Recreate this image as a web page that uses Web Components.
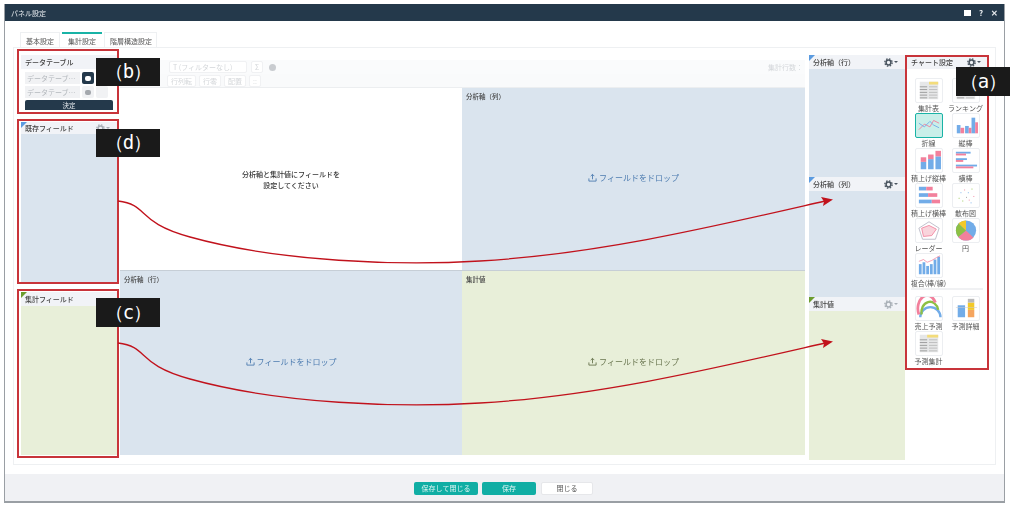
<!DOCTYPE html>
<html lang="ja">
<head>
<meta charset="utf-8">
<title>パネル設定</title>
<style>
  html, body { margin: 0; padding: 0; background: #fff; }
  body { font-family: "Noto Sans CJK JP", "Noto Sans", sans-serif; width: 1024px; height: 507px; overflow: hidden; }
</style>
</head>
<body>
<settings-page></settings-page>

<script>
const GEAR = `<svg width="9" height="9" viewBox="0 0 12 12"><circle cx="6" cy="6" r="3.2" fill="none" stroke="currentColor" stroke-width="2"/><circle cx="6" cy="6" r="4.9" fill="none" stroke="currentColor" stroke-width="1.8" stroke-dasharray="2 1.85"/></svg>`;
const UPLOAD = `<svg width="9" height="9" viewBox="0 0 10 10" fill="none" stroke="currentColor" stroke-width="1"><path d="M1 6v3h8V6M5 7V1.5M3 3.5l2-2 2 2"/></svg>`;

class GearMenu extends HTMLElement {
  constructor() {
    super();
    this.attachShadow({ mode: 'open' });
    this.shadowRoot.innerHTML = `
      <style>
        :host { display: inline-flex; align-items: center; gap: 1px; color: #4a5560; }
        :host([muted]) { color: #a9b0b7; }
        i { width: 0; height: 0; border: 2px solid transparent; border-top-color: currentColor; border-bottom: 0; }
        svg { display: block; }
      </style>${GEAR}<i></i>`;
  }
}
customElements.define('gear-menu', GearMenu);

// パネル（見出し + 本体）
class FieldPanel extends HTMLElement {
  constructor() {
    super();
    this.attachShadow({ mode: 'open' });
    this.shadowRoot.innerHTML = `
      <style>
        :host { display: flex; flex-direction: column; min-height: 0; position: relative; background: #f1f3f7; --zone: #dae4ee; }
        :host([tone="green"]) { --zone: #e8efd9; }
        .head { flex: none; height: var(--head, 14px); display: flex; align-items: center; justify-content: space-between;
                padding: 0 7px 0 4px; font-size: 7px; font-weight: 500; color: #444; white-space: nowrap; }
        .body { flex: 1; min-height: 0; background: var(--zone); }
        .mark { position: absolute; left: 0; top: 0; width: 0; height: 0; border-top: 6px solid #5b9be0; border-right: 6px solid transparent; }
        :host([tone="green"]) .mark { border-top-color: #6b9c2e; }
        :host([plain]) .mark { display: none; }
        :host([plain]) .body { background: #fff; }
      </style>
      <div class="mark"></div>
      <div class="head"><span></span><slot name="tool"></slot></div>
      <div class="body"><slot></slot></div>`;
  }
  connectedCallback() {
    this.shadowRoot.querySelector('.head span').textContent = this.getAttribute('label') || '';
  }
}
customElements.define('field-panel', FieldPanel);

class DropZone extends HTMLElement {
  constructor() {
    super();
    this.attachShadow({ mode: 'open' });
    this.shadowRoot.innerHTML = `
      <style>
        :host { display: flex; flex-direction: column; min-height: 0; background: #dae4ee; color: #4d7cb0; }
        :host([tone="green"]) { background: #e8efd9; color: #69754f; }
        .head { flex: none; height: 15px; padding: 0 4px; display: flex; align-items: center; font-size: 6.5px; font-weight: 500; color: #444; }
        .msg { flex: 1; display: flex; align-items: center; justify-content: center; gap: 2px; font-size: 8px; padding-bottom: 18px; }
        svg { display: block; }
      </style>
      <div class="head"></div>
      <div class="msg">${UPLOAD}<span>フィールドをドロップ</span></div>`;
  }
  connectedCallback() {
    this.shadowRoot.querySelector('.head').textContent = this.getAttribute('label') || '';
  }
}
customElements.define('drop-zone', DropZone);

class DataTablePanel extends HTMLElement {
  constructor() {
    super();
    this.attachShadow({ mode: 'open' });
    this.shadowRoot.innerHTML = `
      <style>
        :host { display: flex; flex-direction: column; background: #fff; }
        .head { height: 14px; flex: none; background: #f1f3f7; display: flex; align-items: center; padding: 0 4px; font-size: 7px; font-weight: 500; color: #444; }
        .rows { display: grid; grid-template-columns: 55px 12px 12px; gap: 2px 2px; padding: 3px 4px 0 4px; }
        .inp { height: 12px; background: #f1f2f4; color: #b4b8bd; font-size: 7px; line-height: 12px; padding-left: 2px; white-space: nowrap; overflow: hidden; }
        .btn { height: 12px; background: #f1f2f4; border-radius: 2px; display: flex; align-items: center; justify-content: center; }
        .btn.on { background: #24394b; }
        .btn b { width: 6px; height: 5px; border-radius: 2px; background: #a4a8ad; }
        .btn.on b { background: #fff; }
        .ok { margin: 2px 4px 0 4px; height: 10px; background: #24394b; border-radius: 2px 2px 0 0; color: #e4e8ec; font-size: 6.5px; line-height: 10px; text-align: center; }
      </style>
      <div class="head">データテーブル</div>
      <div class="rows">
        <div class="inp">データテーブ…</div><div class="btn on"><b></b></div><div></div>
        <div class="inp">データテーブ…</div><div class="btn"><b></b></div><div class="btn"></div>
      </div>
      <div class="ok">決定</div>`;
  }
}
customElements.define('data-table-panel', DataTablePanel);

const BLUE = '#72ace8', PINK = '#f2809c', YEL = '#f3c928', GRN = '#8dc044';
const bars = (list) => list.map(([x, y, w, h, c]) => `<rect x="${x}" y="${y}" width="${w}" height="${h}" fill="${c}"/>`).join('');
const table = (hd) => {
  let s = `<rect x="4" y="3" width="20" height="19" fill="#e6e7e8"/><rect x="${hd}" y="3" width="${24 - hd}" height="3" fill="#f3dc7a"/>`;
  for (let y = 8; y < 22; y += 3) s += `<rect x="4" y="${y}" width="8" height="1" fill="#999"/><rect x="14" y="${y}" width="9" height="1" fill="#bbb"/>`;
  return s;
};
const CHART_ICONS = {
  table: table(14),
  rank: table(4),
  line: `<polyline points="3,17 9,11 15,14 19,7 25,10" fill="none" stroke="${PINK}" stroke-width="1"/><polyline points="3,10 9,14 15,8 19,12 25,15" fill="none" stroke="${BLUE}" stroke-width="1"/>`,
  column: bars([[4,12,4,9,BLUE],[8,15,4,6,PINK],[13,13,4,8,BLUE],[17,15,3,6,PINK],[20,4,4,17,BLUE],[24,9,3,12,PINK]]),
  stackcol: bars([[5,14,6,8,BLUE],[5,9,6,5,PINK],[13,11,6,11,BLUE],[13,6,6,5,PINK],[21,8,6,14,BLUE],[21,2,6,6,PINK]]),
  bar: bars([[3,3,16,2,BLUE],[3,5,11,2,PINK],[3,10,12,2,BLUE],[3,12,8,2,PINK],[3,17,23,2,BLUE],[3,19,19,2,PINK]]),
  stackbar: bars([[3,3,8,4,BLUE],[11,3,7,4,PINK],[3,10,10,4,BLUE],[13,10,10,4,PINK],[3,17,14,4,BLUE],[17,17,9,4,PINK]]),
  scatter: bars([[6,15,1,1,GRN],[10,18,1,1,GRN],[12,6,1,1,PINK],[16,9,1,1,BLUE],[20,5,1,1,GRN],[22,13,1,1,PINK],[17,17,1,1,PINK],[8,9,1,1,BLUE],[19,20,1,1,BLUE],[14,14,1,1,'#999']]),
  radar: `<polygon points="14,3 25,10 21,22 7,22 3,10" fill="none" stroke="#aab" stroke-width=".8"/><polygon points="14,7 22,11 17,18 8,19 6,10" fill="#f9d4dc" stroke="${PINK}" stroke-width=".9"/>`,
  pie: `<circle cx="14" cy="12.5" r="11" fill="${BLUE}"/><path d="M14 12.5L22 20A11 11 0 0 1 5.5 19.5Z" fill="${PINK}"/><path d="M14 12.5L5.500 19.500A11 11 0 0 1 6 5Z" fill="${GRN}"/><path d="M14 12.5L6 5A11 11 0 0 1 14 1.500Z" fill="${YEL}"/>`,
  combo: bars([[3,11,3,11,BLUE],[7,9,3,13,BLUE],[11,13,3,9,BLUE],[15,11,3,11,BLUE],[19,6,3,16,BLUE],[23,3,3,19,BLUE]]) + `<polyline points="3,8 8,6 12,9 17,7 22,4 26,2" fill="none" stroke="${PINK}" stroke-width=".8"/>`,
  forecast: `<path d="M3 22A11 11 0 0 1 25 22" fill="none" stroke="${BLUE}" stroke-width="2.600" transform="translate(1.500 0)"/><path d="M5 22A9 11 0 0 1 23 17" fill="none" stroke="${GRN}" stroke-width="2.600" transform="translate(1 -3)"/><path d="M3 22A10 14 0 0 1 21 9" fill="none" stroke="${PINK}" stroke-width="3" transform="translate(0 -3)"/>`,
  detail: bars([[5,9,8,13,BLUE],[16,14,7,8,'#f5a55f'],[16,6,7,8,YEL],[16,2,7,4,'#b9b9b9']]) + `<rect x="3" y="11" width="23" height=".6" fill="#ccc"/>`,
  sumfc: table(12)
};

class ChartItem extends HTMLElement {
  constructor() {
    super();
    this.attachShadow({ mode: 'open' });
  }
  connectedCallback() {
    const kind = this.getAttribute('kind');
    this.shadowRoot.innerHTML = `
      <style>
        :host { display: flex; flex-direction: column; align-items: center; font-size: 7px; color: #555; white-space: nowrap; line-height: 9px; }
        .ic { width: 28px; height: 25px; box-sizing: border-box; background: #fff; border: 1px solid #eceef1; border-radius: 2px; flex: none; }
        :host([selected]) .ic { background: #c9efe9; border: 1px solid #19b3a6; }
        svg { display: block; width: 100%; height: 100%; }
        .t { margin-top: 1px; }
      </style>
      <div class="ic"><svg viewBox="0 0 28 25">${CHART_ICONS[kind] || ''}</svg></div>
      <div class="t"><slot></slot></div>`;
  }
}
customElements.define('chart-item', ChartItem);

class ChartPanel extends HTMLElement {
  constructor() {
    super();
    this.attachShadow({ mode: 'open' });
    this.shadowRoot.innerHTML = `
      <style>
        :host { display: flex; flex-direction: column; background: #fff; }
        .head { height: 14px; flex: none; background: #f1f3f7; display: flex; align-items: center; justify-content: space-between;
                padding: 0 6px 0 4px; font-size: 7px; font-weight: 500; color: #444; }
        .grid { display: grid; grid-template-columns: 37px 37px; grid-auto-rows: 35px; justify-content: center; padding-top: 9px; }
        .sep { height: 2px; background: #f0f1f3; margin: 0 4px; }
        .grid.b { padding-top: 6px; }
      </style>
      <div class="head">チャート設定<gear-menu></gear-menu></div>
      <div class="grid">
        <chart-item kind="table">集計表</chart-item><chart-item kind="rank">ランキング</chart-item>
        <chart-item kind="line" selected>折線</chart-item><chart-item kind="column">縦棒</chart-item>
        <chart-item kind="stackcol">積上げ縦棒</chart-item><chart-item kind="bar">横棒</chart-item>
        <chart-item kind="stackbar">積上げ横棒</chart-item><chart-item kind="scatter">散布図</chart-item>
        <chart-item kind="radar">レーダー</chart-item><chart-item kind="pie">円</chart-item>
        <chart-item kind="combo">複合(棒/線)</chart-item>
      </div>
      <div class="sep"></div>
      <div class="grid b">
        <chart-item kind="forecast">売上予測</chart-item><chart-item kind="detail">予測詳細</chart-item>
        <chart-item kind="sumfc">予測集計</chart-item>
      </div>`;
  }
}
customElements.define('chart-panel', ChartPanel);

class GridToolbar extends HTMLElement {
  constructor() {
    super();
    this.attachShadow({ mode: 'open' });
    this.shadowRoot.innerHTML = `
      <style>
        :host { display: flex; flex-direction: column; height: 30px; padding-top: 2px; box-sizing: border-box; color: #d4d7da; font-size: 7px; border-bottom: 1px solid #eceef0; }
        .r1 { height: 14px; flex: none; display: flex; align-items: center; gap: 4px; padding-left: 49px; background: #fafbfc; }
        .r2 { flex: 1; display: flex; align-items: center; gap: 3px; padding-left: 47px; background: #f9fafb; }
        .chip { border: 1px solid #f0f1f3; background: #fff; border-radius: 2px; padding: 0 3px; line-height: 10px; white-space: nowrap; }
        .sel { width: 70px; }
        .dot { width: 7px; height: 7px; border-radius: 50%; background: #c9ccd0; margin-left: 2px; }
        .end { margin-left: auto; padding-right: 2px; }
      </style>
      <div class="r1"><span class="chip sel">T (フィルターなし)</span><span class="chip">Σ</span><span class="dot"></span><span class="end">集計行数：</span></div>
      <div class="r2"><span class="chip">行列転</span><span class="chip">行零</span><span class="chip">配置</span><span class="chip">::</span></div>`;
  }
}
customElements.define('grid-toolbar', GridToolbar);

class PivotGrid extends HTMLElement {
  constructor() {
    super();
    this.attachShadow({ mode: 'open' });
    this.shadowRoot.innerHTML = `
      <style>
        :host { display: flex; flex-direction: column; min-height: 0; background: #fff; }
        .g { flex: 1; display: grid; grid-template-columns: 342px 343px; grid-template-rows: 182px 184px; gap: 1px 0; background: #c6ced6; }
        .note { background: #fff; display: flex; align-items: center; justify-content: center; text-align: center;
                font-size: 7px; line-height: 11px; font-weight: 500; color: #333; padding-top: 2px; }
      </style>
      <grid-toolbar></grid-toolbar>
      <div class="g">
        <div class="note"><div>分析軸と集計値にフィールドを<br>設定してください</div></div>
        <drop-zone label="分析軸（列）"></drop-zone>
        <drop-zone label="分析軸（行）"></drop-zone>
        <drop-zone label="集計値" tone="green"></drop-zone>
      </div>`;
  }
}
customElements.define('pivot-grid', PivotGrid);

// 注釈（赤枠・ラベル・矢印）はスクリーンショット上に重ねる
class CallOut extends HTMLElement {
  constructor() {
    super();
    this.attachShadow({ mode: 'open' });
    this.shadowRoot.innerHTML = `
      <style>
        :host { position: absolute; inset: 0; pointer-events: none; display: block; }
        .box { position: absolute; box-sizing: border-box; border: 2px solid #c8343a; }
        .tag { position: absolute; background: #1a1a1a; color: #fff; font: 19px "DejaVu Sans Mono", "Liberation Mono", monospace;
               display: flex; align-items: center; justify-content: center; letter-spacing: -1px; white-space: nowrap; }
        svg { position: absolute; left: 0; top: 0; }
      </style>
      <div class="box" style="left:17px;top:49px;width:102px;height:65px"></div>
      <div class="box" style="left:17px;top:119px;width:102px;height:165px"></div>
      <div class="box" style="left:17px;top:289px;width:102px;height:169px"></div>
      <div class="box" style="left:905px;top:55px;width:84px;height:315px"></div>
      <svg width="1024" height="507" fill="none" stroke="#c1121c" stroke-width="1.3">
        <path d="M118 201C150 205 135 222 190 237C280 262 400 266 480 261C600 254 720 225 825 201"/>
        <path d="M118 343C150 347 135 364 190 379C280 404 400 408 480 403C600 396 720 367 825 343"/>
        <path d="M833 199.500L821 197L824 201.500L823 206Z" fill="#c1121c" stroke="none"/>
        <path d="M833 341.500L821 339L824 343.500L823 348Z" fill="#c1121c" stroke="none"/>
      </svg>
      <div class="tag" style="left:96px;top:58px;width:64px;height:28px">（b）</div>
      <div class="tag" style="left:96px;top:129px;width:64px;height:28px">（d）</div>
      <div class="tag" style="left:96px;top:298px;width:64px;height:29px">（c）</div>
      <div class="tag" style="left:956px;top:67px;width:54px;height:29px">（a）</div>`;
  }
}
customElements.define('call-out', CallOut);

class SettingsPage extends HTMLElement {
  constructor() {
    super();
    this.attachShadow({ mode: 'open' });
    this.shadowRoot.innerHTML = `
      <style>
        :host { display: block; width: 1024px; height: 507px; position: relative; overflow: hidden; font-family: "Noto Sans CJK JP", "Noto Sans", sans-serif; }
        .shell { filter: blur(.35px); margin: 4px 19px 0 4px; height: 499px; box-sizing: border-box; display: flex; flex-direction: column;
                 background: #fff; border-left: 1px solid #9a9fa4; border-right: 1px solid #9a9fa4; border-bottom: 2px solid #9a9fa4; }
        .title { flex: none; height: 17px; background: #24394b; color: #e8ecef; font-size: 7px; display: flex; align-items: center; justify-content: space-between; padding: 0 6px; }
        .ctl { display: flex; gap: 8px; align-items: center; font-size: 8px; font-weight: 700; }
        .ctl b { width: 7px; height: 6px; background: #fff; display: block; }
        .main { flex: 1; min-height: 0; padding: 11px 8px 9px 8px; display: flex; flex-direction: column; }
        .tabs { flex: none; height: 15px; display: flex; gap: 2px; padding-left: 7px; font-size: 7px; color: #555; }
        .tab { border: 1px solid #eef0f2; border-bottom: 0; padding: 2px 5px 0; box-sizing: border-box; line-height: 12px; text-align: center; white-space: nowrap; }
        .tab.on { border: 0; border-top: 2px solid #19b3a6; padding-top: 1px; width: 40px; }
        .tab.w { width: 40px; }
        .tab.x { width: 53px; }
        .pane { flex: 1; min-height: 0; border: 1px solid #eef0f2; padding: 7px 6px 5px 7px; display: grid; gap: 0 3px;
                grid-template-columns: 96px 685px 96px 80px; column-gap: 3px; }
        .left { display: grid; grid-template-rows: 58px 161px 163px; row-gap: 9px; align-content: start; }
        .mid { padding-top: 3px; height: 400px; box-sizing: border-box; display: flex; flex-direction: column; }
        .right { display: grid; grid-template-rows: 122px 120px 163px; margin-left: 1px; width: 96px; }
        .foot { flex: none; height: 27px; background: #f0f1f4; display: flex; align-items: center; justify-content: center; gap: 4px; padding-right: 2px; padding-top: 1px; box-sizing: border-box; }
        .b { height: 13px; border-radius: 2px; font-size: 7px; line-height: 13px; text-align: center; background: #10aea4; color: #dff5f3; }
        .b.l { width: 64px; } .b.m { width: 54px; }
        .b.n { width: 52px; background: #fff; color: #555; border: 1px solid #e6e7ea; box-sizing: border-box; line-height: 11px; margin-left: 1px; }
      </style>
      <div class="shell">
        <div class="title"><span>パネル設定</span><span class="ctl"><b></b><span>?</span><span>✕</span></span></div>
        <div class="main">
          <div class="tabs"><div class="tab w">基本設定</div><div class="tab on">集計設定</div><div class="tab x">階層構造設定</div></div>
          <div class="pane">
            <div class="left">
              <data-table-panel></data-table-panel>
              <field-panel label="既存フィールド" style="--head:12px"><gear-menu slot="tool" muted></gear-menu></field-panel>
              <field-panel label="集計フィールド" tone="green"></field-panel>
            </div>
            <div class="mid"><pivot-grid></pivot-grid></div>
            <div class="right">
              <field-panel label="分析軸（行）"><gear-menu slot="tool"></gear-menu></field-panel>
              <field-panel label="分析軸（列）"><gear-menu slot="tool"></gear-menu></field-panel>
              <field-panel label="集計値" tone="green"><gear-menu slot="tool" muted></gear-menu></field-panel>
            </div>
            <chart-panel></chart-panel>
          </div>
        </div>
        <div class="foot"><div class="b l">保存して閉じる</div><div class="b m">保存</div><div class="b n">閉じる</div></div>
      </div>
      <call-out></call-out>`;
  }
}
customElements.define('settings-page', SettingsPage);
</script>
</body>
</html>
